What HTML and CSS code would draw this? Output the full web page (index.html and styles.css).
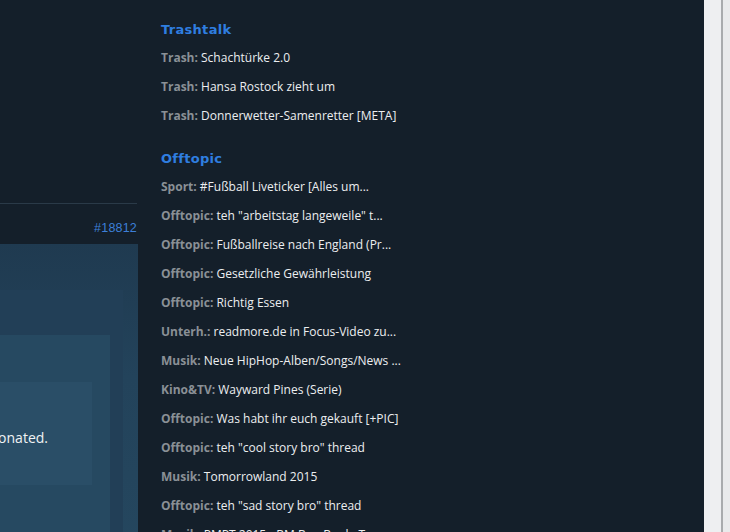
FILE: index.html
```html
<!DOCTYPE html>
<html lang="de">
<head>
<meta charset="utf-8">
<title>Forum</title>
<link rel="stylesheet" href="styles.css">
</head>
<body>
<div class="page">
  <div class="main-col">
    <div class="top-space"></div>
    <div class="post-head"><a class="post-id">#18812</a></div>
    <div class="post-body">
      <div class="box box1">
        <div class="box box2">
          <div class="box box3">
            <span class="box-text">Dieser Beitrag wurde von einem User gespendet, der hat donated.</span>
          </div>
        </div>
      </div>
    </div>
  </div>
  <aside class="sidebar">
    <section class="group">
      <h2 class="group-title">Trashtalk</h2>
      <ul class="topics">
        <li><span class="cat">Trash:</span> Schachtürke 2.0</li>
        <li><span class="cat">Trash:</span> Hansa Rostock zieht um</li>
        <li><span class="cat">Trash:</span> Donnerwetter-Samenretter [META]</li>
      </ul>
    </section>
    <section class="group">
      <h2 class="group-title">Offtopic</h2>
      <ul class="topics">
        <li><span class="cat">Sport:</span> #Fußball Liveticker [Alles um...</li>
        <li><span class="cat">Offtopic:</span> teh "arbeitstag langeweile" t...</li>
        <li><span class="cat">Offtopic:</span> Fußballreise nach England (Pr...</li>
        <li><span class="cat">Offtopic:</span> Gesetzliche Gewährleistung</li>
        <li><span class="cat">Offtopic:</span> Richtig Essen</li>
        <li><span class="cat">Unterh.:</span> readmore.de in Focus-Video zu...</li>
        <li><span class="cat">Musik:</span> Neue HipHop-Alben/Songs/News ...</li>
        <li><span class="cat">Kino&amp;TV:</span> Wayward Pines (Serie)</li>
        <li><span class="cat">Offtopic:</span> Was habt ihr euch gekauft [+PIC]</li>
        <li><span class="cat">Offtopic:</span> teh "cool story bro" thread</li>
        <li><span class="cat">Musik:</span> Tomorrowland 2015</li>
        <li><span class="cat">Offtopic:</span> teh "sad story bro" thread</li>
        <li><span class="cat">Musik:</span> PMPT 2015 - BM Boo Boule To...</li>
      </ul>
    </section>
  </aside>
  <div class="scroll-strip">
    <div class="scroll-track"></div>
    <div class="scroll-line"></div>
    <div class="scroll-edge"></div>
  </div>
</div>
</body>
</html>
```

FILE: styles.css
```css
html, body {
  margin: 0;
  padding: 0;
  background: #141f2a;
  width: 730px;
  height: 532px;
  overflow: hidden;
}

.page {
  display: flex;
  width: 730px;
  height: 532px;
  background: #141f2a;
  font-family: "Open Sans", "Liberation Sans", sans-serif;
}

.main-col {
  width: 138px;
  flex: 0 0 138px;
  display: flex;
  flex-direction: column;
  overflow: hidden;
}

.top-space {
  flex: 0 0 203px;
  border-bottom: 1px solid #2a3a48;
  margin-right: 1px;
}

.post-head {
  flex: 0 0 40px;
  display: flex;
  justify-content: flex-end;
  align-items: center;
  padding-right: 1px;
}

.post-id {
  color: #3d7fd8;
  font-size: 12.5px;
  font-family: "Liberation Sans", Arial, sans-serif;
  margin-top: 8px;
  letter-spacing: 0.2px;
}

.post-body {
  flex: 1 0 auto;
  background: linear-gradient(#1f3a50, #23435b 40%, #25475f);
  padding-top: 46px;
}

.box {
  display: flex;
  flex-direction: column;
  flex-shrink: 0;
}

.box1 {
  margin-right: 15px;
  padding-top: 45px;
  background: #223f57;
  height: 240px;
}

.box2 {
  margin-right: 13px;
  padding-top: 47px;
  background: #264961;
  height: 160px;
}

.box3 {
  margin-right: 18px;
  height: 103px;
  background: #2a4e67;
  flex-direction: row;
  justify-content: flex-end;
  align-items: center;
  padding-right: 44px;
}

.box-text {
  white-space: nowrap;
  color: #f0f2f4;
  font-size: 14px;
  flex: 0 0 auto;
  margin-top: 8px;
}

.sidebar {
  flex: 1;
  padding: 20px 0 0 23px;
  overflow: hidden;
}

.group {
  margin-bottom: 19px;
}

.group-title {
  margin: 0 0 3px 0;
  font-family: "DejaVu Sans", sans-serif;
  font-weight: bold;
  font-size: 13px;
  line-height: 20px;
  color: #2f7ee0;
  letter-spacing: 0.3px;
}

.topics {
  list-style: none;
  margin: 0;
  padding: 0;
}

.topics li {
  font-size: 12px;
  line-height: 17px;
  padding: 6px 0;
  color: #eceef0;
  white-space: nowrap;
}

.cat {
  font-weight: bold;
  color: #8a9096;
}

.scroll-strip {
  flex: 0 0 26px;
  display: flex;
}

.scroll-track {
  flex: 0 0 17px;
  background: #eeeff1;
}

.scroll-line {
  flex: 0 0 2px;
  background: #a9abad;
}

.scroll-edge {
  flex: 1;
  background: #e9eaeb;
}
```
